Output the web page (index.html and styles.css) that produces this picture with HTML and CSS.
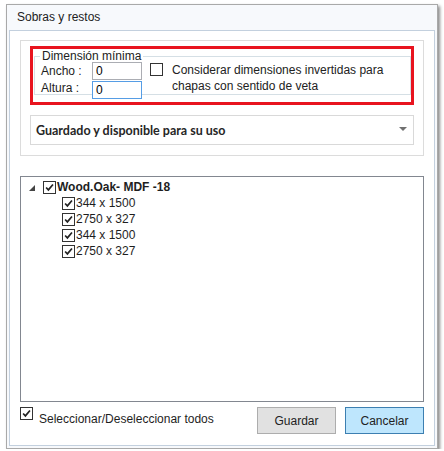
FILE: index.html
```html
<!DOCTYPE html>
<html>
<head>
    <meta charset="utf-8"/>
    <title>Sobras y restos</title>
    <link rel="stylesheet" href="styles.css">
</head>
<body>
<div class="window">
    <div class="titlebar">Sobras y restos</div>
    <div class="client">
        <div class="panel">
            <div class="highlight">
                <fieldset class="dims">
                    <legend>Dimensión mínima</legend>
                    <div class="dim-row">
                        <div class="labels">
                            <span>Ancho :</span>
                            <span>Altura :</span>
                        </div>
                        <div class="inputs">
                            <input type="text" value="0"/>
                            <input type="text" value="0" class="focused"/>
                        </div>
                        <span class="box"></span>
                        <span class="invert-text">Considerar dimensiones invertidas para<br/>chapas con sentido de veta</span>
                    </div>
                </fieldset>
            </div>
            <div class="combo">
                <span>Guardado y disponible para su uso</span>
                <span class="combo-arrow"></span>
            </div>
        </div>

        <div class="tree">
            <div class="node root">
                <span class="expander"></span>
                <span class="box checked"><svg viewBox="0 0 13 13"><path d="M2.5 6.5 L5.2 9.3 L10.6 3" fill="none" stroke="#222" stroke-width="2"/></svg></span>
                <span class="name">Wood.Oak- MDF -18</span>
            </div>
            <div class="node child">
                <span class="box checked"><svg viewBox="0 0 13 13"><path d="M2.5 6.5 L5.2 9.3 L10.6 3" fill="none" stroke="#222" stroke-width="2"/></svg></span>
                <span>344 x 1500</span>
            </div>
            <div class="node child">
                <span class="box checked"><svg viewBox="0 0 13 13"><path d="M2.5 6.5 L5.2 9.3 L10.6 3" fill="none" stroke="#222" stroke-width="2"/></svg></span>
                <span>2750 x 327</span>
            </div>
            <div class="node child">
                <span class="box checked"><svg viewBox="0 0 13 13"><path d="M2.5 6.5 L5.2 9.3 L10.6 3" fill="none" stroke="#222" stroke-width="2"/></svg></span>
                <span>344 x 1500</span>
            </div>
            <div class="node child">
                <span class="box checked"><svg viewBox="0 0 13 13"><path d="M2.5 6.5 L5.2 9.3 L10.6 3" fill="none" stroke="#222" stroke-width="2"/></svg></span>
                <span>2750 x 327</span>
            </div>
        </div>

        <div class="footer">
            <div class="select-all">
                <span class="box checked"><svg viewBox="0 0 13 13"><path d="M2.5 6.5 L5.2 9.3 L10.6 3" fill="none" stroke="#222" stroke-width="2"/></svg></span>
                <span class="select-text">Seleccionar/Deseleccionar todos</span>
            </div>
            <button class="btn">Guardar</button>
            <button class="btn primary">Cancelar</button>
        </div>
    </div>
</div>
</body>
</html>
```

FILE: styles.css
```css
html, body { margin: 0; padding: 0; background: #fff; }
body { font-family: "Liberation Sans", "Noto Sans", sans-serif; font-size: 12px; color: #1e1e1e; padding: 4px 0 0 6px; }

.window { width: 430px; height: 443px; border: 1px solid #a9a9a9; background: #f7f9fc; box-shadow: 2px 2px 3px rgba(0,0,0,0.45); display: flex; flex-direction: column; }
.titlebar { height: 25px; line-height: 24px; padding-left: 10px; color: #222; }
.client { flex: 1; margin: 0 2px 2px 2px; border: 1px solid #c3d0de; background: #fff; padding: 9px 10px 0 10px; display: flex; flex-direction: column; }

.panel { border: 1px solid #dcdcdc; padding: 5px 9px 10px 9px; }
.highlight { border: 3px solid #e8141f; padding: 0 0 1px 1px; height: 52px; }
.dims { margin: 0; padding: 0 6px 0 6px; border: 1px solid #d5dfe5; border-radius: 0; height: 46px; box-sizing: border-box; }
.dims legend { padding: 0 2px; margin-left: -1px; line-height: 14px; color: #222; }
.dim-row { display: flex; align-items: flex-start; margin-top: -1px; }
.labels { display: flex; flex-direction: column; width: 51px; }
.labels span { height: 17px; line-height: 18px; }
.inputs { display: flex; flex-direction: column; gap: 1px; }
.inputs input { width: 50px; height: 18px; box-sizing: border-box; border: 1px solid #abadb3; padding: 0 3px; margin: 0; font: inherit; color: #000; outline: none; }
.inputs input.focused { border-color: #569de5; }
.dim-row > .box { margin: 1px 0 0 8px; }
.invert-text { margin-left: 9px; line-height: 16px; color: #222; }

.box { width: 13px; height: 13px; box-sizing: border-box; border: 1px solid #333; background: #fff; display: inline-block; flex: none; }
.box svg { display: block; width: 11px; height: 11px; }

.combo { margin-top: 10px; height: 30px; box-sizing: border-box; border: 1px solid #d9d9d9; display: flex; align-items: center; justify-content: space-between; padding: 0 6px 0 5px; font-family: Lato, "Liberation Sans", sans-serif; font-size: 12.5px; font-weight: bold; color: #262626; }
.combo-arrow { width: 0; height: 0; border-left: 4px solid transparent; border-right: 4px solid transparent; border-top: 4px solid #707070; margin-top: -2px; }

.tree { margin-top: 20px; height: 226px; box-sizing: border-box; border: 1px solid #828790; padding-top: 2px; }
.node { height: 16px; display: flex; align-items: center; }
.root { padding-left: 8px; }
.expander { width: 0; height: 0; border-left: 6px solid transparent; border-bottom: 6px solid #444; margin-right: 8px; margin-top: 1px; }
.root .name { font-weight: bold; margin-left: 1px; }
.child { padding-left: 41px; }
.child .box { margin-right: 1px; }

.footer { display: flex; align-items: flex-start; padding-top: 5px; }
.select-all { flex: 1; display: flex; align-items: flex-start; gap: 6px; }
.select-text { margin-top: 5px; line-height: 14px; }
.btn { width: 79px; height: 27px; border: 1px solid #adadad; background: #e1e1e1; font: inherit; color: #222; margin: 0 0 0 9px; padding: 0; }
.btn.primary { background: #bee6fd; border-color: #3c7fb1; }
```
